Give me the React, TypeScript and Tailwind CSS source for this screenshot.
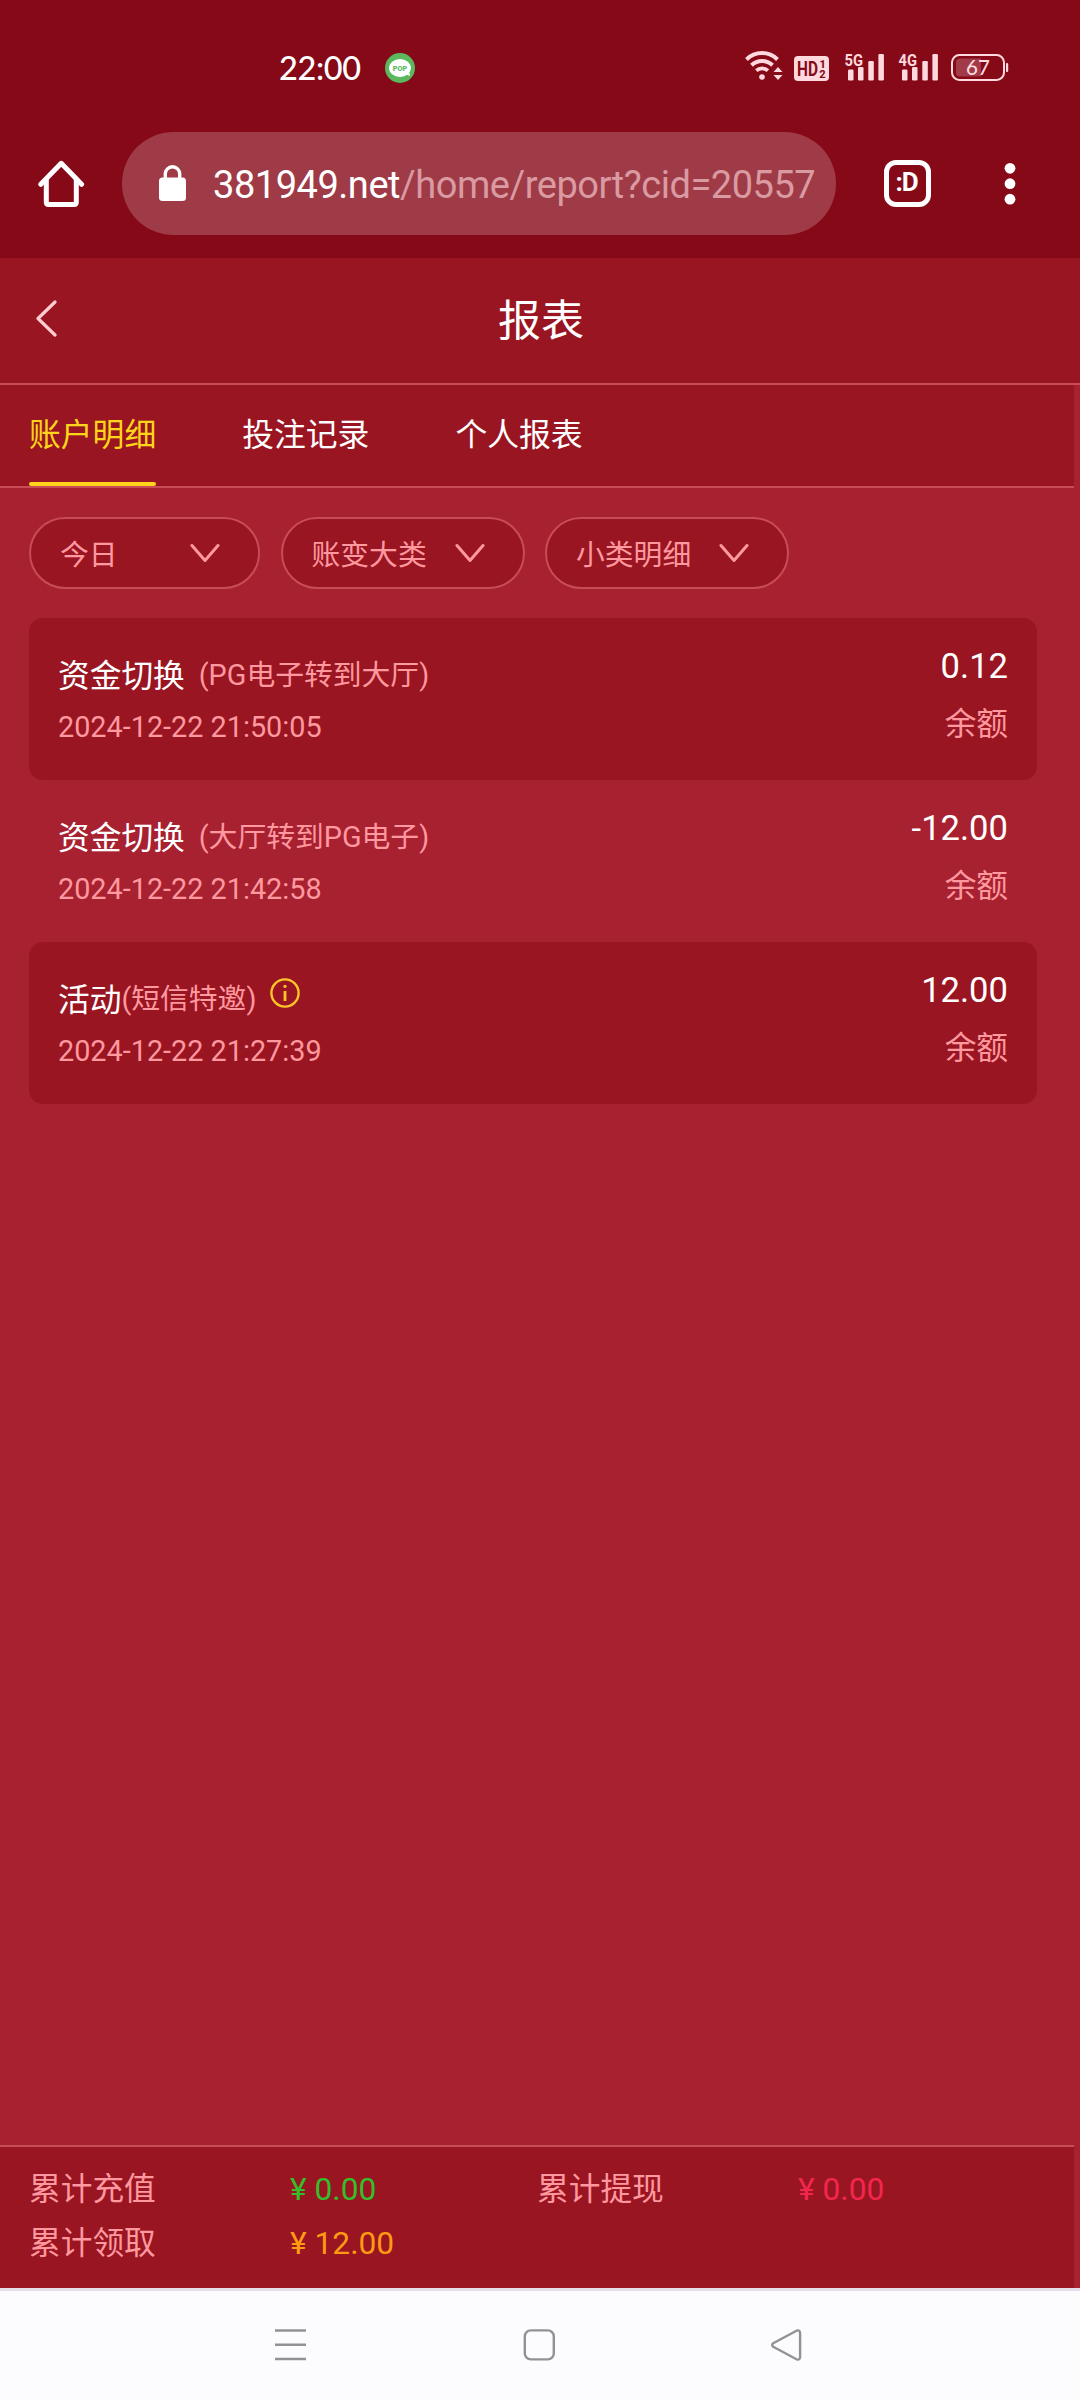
import type { ReactNode } from "react";

type Entry = {
  title: string;
  note: string;
  spaced?: boolean;
  info?: boolean;
  time: string;
  amount: string;
};

const entries: Entry[] = [
  { title: "资金切换", note: "(PG电子转到大厅)", spaced: true, time: "2024-12-22 21:50:05", amount: "0.12" },
  { title: "资金切换", note: "(大厅转到PG电子)", spaced: true, time: "2024-12-22 21:42:58", amount: "-12.00" },
  { title: "活动", note: "(短信特邀)", info: true, time: "2024-12-22 21:27:39", amount: "12.00" },
];

const tabs = ["账户明细", "投注记录", "个人报表"];

const filters = [
  { label: "今日", width: "w-[231px]" },
  { label: "账变大类", width: "w-[244px]" },
  { label: "小类明细", width: "w-[244px]" },
];

const totals = [
  { label: "累计充值", value: "¥ 0.00", color: "text-[#35be2b]" },
  { label: "累计提现", value: "¥ 0.00", color: "text-[#f3264e]" },
  { label: "累计领取", value: "¥ 12.00", color: "text-[#ff9a12]" },
];

function Signal({ label }: { label: string }) {
  return (
    <svg width="40" height="40" viewBox="0 -10 40 40" fill="#ffd9dd">
      <text x="0.5" y="13.5" fontSize="16.5" fontWeight="700" textLength="18.5" lengthAdjust="spacingAndGlyphs" className="font-['Roboto',sans-serif]">
        {label}
      </text>
      <rect x="4" y="17.5" width="5.5" height="11" rx="1.2" />
      <rect x="14" y="15" width="5.5" height="13.5" rx="1.2" />
      <rect x="24.3" y="9" width="5.5" height="19.5" rx="1.2" />
      <rect x="34.4" y="2" width="5.5" height="26.5" rx="1.2" />
    </svg>
  );
}

function StatusBar() {
  return (
    <div className="flex h-[132px] items-start pt-[50px]">
      <span className="ml-[279px] w-[106px] font-['Lato',sans-serif] text-[32.5px] leading-[36px] font-medium tracking-[-0.4px] text-white">
        22:00
      </span>
      <svg width="30" height="30" viewBox="0 0 30 30" className="mt-[3px]">
        <circle cx="15" cy="15" r="15" fill="#5bb85d" />
        <ellipse cx="15" cy="15" rx="11" ry="9" fill="#fff" />
        <path d="M20 21l5 2-1-5z" fill="#fff" />
        <text x="7.8" y="18" fontSize="8" fontWeight="900" textLength="14.4" lengthAdjust="spacingAndGlyphs" fill="#5bb85d" className="font-['Roboto',sans-serif]">
          POP
        </text>
      </svg>
      <svg width="38" height="30" viewBox="0 0 38 30" fill="none" stroke="#ffd9dd" className="ml-[330px]">
        <path d="M1.5 9.5a22 22 0 0 1 31 0" strokeWidth="4" />
        <path d="M6.5 15.2a15 15 0 0 1 21 0" strokeWidth="4" />
        <path d="M11.3 20.7a8.5 8.5 0 0 1 11.6 0" strokeWidth="3.8" />
        <circle cx="17" cy="27" r="2.8" fill="#ffd9dd" stroke="none" />
        <path d="M28.5 22h9L33 17zM28.5 25h9L33 30z" fill="#ffd9dd" stroke="none" />
      </svg>
      <svg width="35" height="25" viewBox="0 0 35 25" className="mt-[6px] ml-[11px]">
        <rect width="35" height="25" rx="4" fill="#ffd9dd" />
        <text x="3" y="19.5" fontSize="19.5" fontWeight="700" textLength="21" lengthAdjust="spacingAndGlyphs" fill="#860918" className="font-['Roboto',sans-serif]">
          HD
        </text>
        <text x="25.5" y="11.5" fontSize="11" fontWeight="800" fill="#860918" className="font-['Roboto',sans-serif]">
          1
        </text>
        <text x="25.2" y="21.5" fontSize="11" fontWeight="800" fill="#860918" className="font-['Roboto',sans-serif]">
          2
        </text>
      </svg>
      <div className="-mt-[8px] ml-[15px] flex gap-[14px]">
        <Signal label="5G" />
        <Signal label="4G" />
      </div>
      <svg width="58" height="28" viewBox="0 0 58 28" className="mt-[4px] ml-[13px]">
        <rect x="1" y="1" width="52" height="25" rx="7.5" fill="none" stroke="#ffd9dd" strokeWidth="2" />
        <path d="M9 4.5h21v18H9a4 4 0 0 1-4-4v-10a4 4 0 0 1 4-4z" fill="#a23a48" />
        <rect x="55" y="9" width="2.2" height="9" rx="1" fill="#ffd9dd" />
        <text x="15" y="21" fontSize="20.5" fontWeight="500" fill="#ffd9dd" className="font-['Lato',sans-serif]">
          67
        </text>
      </svg>
    </div>
  );
}

function AddressBar() {
  return (
    <div className="flex h-[126px] items-start">
      <svg width="48" height="48" viewBox="0 0 48 48" fill="none" stroke="#fff" strokeWidth="5" strokeLinecap="round" strokeLinejoin="round" className="mt-[28px] ml-[37px]">
        <path d="M3.8 24.3L24.2 3.3l20.4 21" />
        <path d="M9.3 20v22.2q0 2.2 2.2 2.2h25.6q2.2 0 2.2-2.2V20" />
      </svg>
      <div className="ml-[37px] flex h-[103px] w-[714px] items-center rounded-full bg-[#9f3b47] pl-[37px]">
        <svg width="27" height="36" viewBox="0 0 27 36" fill="none" className="mb-[1px]">
          <rect y="12.5" width="27" height="23.5" rx="3.5" fill="#fff" />
          <path d="M6.3 14V9a7.2 7.2 0 0 1 14.4 0v5" stroke="#fff" strokeWidth="3.4" />
        </svg>
        <span className="mt-[3px] ml-[27px] text-[38px] leading-[44px] tracking-[-0.47px] whitespace-nowrap text-[#da9aa2]">
          <span className="text-white">381949.net</span>/home/report?cid=20557
        </span>
      </div>
      <div className="mt-[28px] ml-[48px] flex h-[47px] w-[47px] justify-center rounded-[12px] border-[5px] border-white pr-[2px] text-[26px] leading-[35px] font-bold tracking-[-1px] text-white">
        :D
      </div>
      <svg width="12" height="44" viewBox="0 0 12 44" fill="#fff" className="mt-[30px] ml-[72.5px]">
        <circle cx="6" cy="6.3" r="5.4" />
        <circle cx="6" cy="21.7" r="5.4" />
        <circle cx="6" cy="37.2" r="5.4" />
      </svg>
    </div>
  );
}

function FilterPill({ label, width }: { label: string; width: string }) {
  return (
    <div className={`flex h-[72px] items-center justify-between rounded-full border-2 border-[#c84c57] bg-[#991522] pr-[38px] pl-[29px] ${width}`}>
      <span className="mt-[3px] text-[28.8px] leading-[40px] text-[#ff989f]">{label}</span>
      <svg width="30" height="20" viewBox="0 0 30 20" fill="none" stroke="#ff989f" strokeWidth="3" strokeLinecap="round" strokeLinejoin="round">
        <path d="M2 2.5l13 15 13-15" />
      </svg>
    </div>
  );
}

function EntryRow({ entry, shaded }: { entry: Entry; shaded: boolean }) {
  return (
    <div className={`flex h-[162px] justify-between rounded-[14px] px-[29px] ${shaded ? "bg-[#991522]" : ""}`}>
      <div className="flex flex-col pt-[36px]">
        <div className="flex h-[46px] items-center">
          <span className="text-[31.7px] leading-[44px] text-white">{entry.title}</span>
          <span className={`mb-[4px] text-[28.8px] leading-[40px] text-[#ff989f] ${entry.spaced ? "ml-[14px]" : ""}`}>{entry.note}</span>
          {entry.info && (
            <svg width="30" height="30" viewBox="0 0 30 30" fill="none" stroke="#fec52a" strokeWidth="2.4" className="mb-[16px] ml-[14px]">
              <circle cx="15" cy="15" r="13.6" />
              <path d="M15 13v10" strokeWidth="2.8" />
              <circle cx="15" cy="8.3" r="1.6" fill="#fec52a" stroke="none" />
            </svg>
          )}
        </div>
        <span className="mt-[7px] text-[28.8px] leading-[40px] text-[#ff989f]">{entry.time}</span>
      </div>
      <div className="flex flex-col items-end pt-[24px]">
        <span className="text-[34.6px] leading-[48px] text-white">{entry.amount}</span>
        <span className="mt-[13px] text-[31.7px] leading-[44px] text-[#ff989f]">余额</span>
      </div>
    </div>
  );
}

function NavIcon({ children }: { children: ReactNode }) {
  return (
    <svg width="32" height="32" viewBox="0 0 32 32" fill="none" stroke="#929294" strokeWidth="2.4" strokeLinejoin="round">
      {children}
    </svg>
  );
}

export default function App() {
  return (
    <div className="flex h-[2400px] w-[1080px] flex-col overflow-hidden bg-[#a72130] font-['Roboto','Noto_Sans_CJK_SC',sans-serif]">
      <div className="bg-[#860918]">
        <StatusBar />
        <AddressBar />
      </div>

      <header className="grid h-[127px] grid-cols-3 items-center border-b-2 border-[#c84c57] bg-[#991522]">
        <svg width="23" height="37" viewBox="0 0 23 37" fill="none" stroke="#ffcdd1" strokeWidth="3.2" strokeLinecap="round" strokeLinejoin="round" className="mb-[4px] ml-[35px]">
          <path d="M20 2L3 18.5 20 35" />
        </svg>
        <h1 className="ml-[2px] text-center text-[43px] leading-[60px] text-white">报表</h1>
      </header>

      <nav className="flex h-[103px] w-[1074px] gap-[86px] border-b-2 border-[#c84c57] bg-[#991522] pl-[29px]">
        {tabs.map((tab, i) => (
          <div
            key={tab}
            className={`flex flex-col justify-between pt-[28px] text-[31.8px] leading-[44px] ${i === 0 ? "text-[#fed51b]" : "text-white"}`}
          >
            {tab}
            {i === 0 && <div className="h-[4px] rounded-full bg-[#fed51b]" />}
          </div>
        ))}
      </nav>

      <main className="flex-1 px-[29px]">
        <div className="flex gap-[20.5px] pt-[29px]">
          {filters.map((f) => (
            <FilterPill key={f.label} label={f.label} width={f.width} />
          ))}
        </div>
        <div className="mt-[29px] w-[1008px]">
          {entries.map((entry, i) => (
            <EntryRow key={entry.time} entry={entry} shaded={i % 2 === 0} />
          ))}
        </div>
      </main>

      <footer className="h-[143px] w-[1074px] border-t-2 border-[#c84c57] bg-[#991522] px-[29px] pt-[16px]">
        <div className="grid grid-cols-2 text-[31.7px] leading-[54px]">
          {totals.map((t) => (
            <div key={t.label} className="grid grid-cols-2">
              <span className="text-[#ff989f]">{t.label}</span>
              <span className={`pl-[7px] ${t.color}`}>{t.value}</span>
            </div>
          ))}
        </div>
      </footer>

      <div className="flex h-[112px] gap-[216px] border-t-3 border-[#e6deea] bg-[#fcfcfe] pt-[38px] pl-[275px]">
        <NavIcon>
          <path d="M0 1.5h31M0 15.8h31M0 30h31" strokeWidth="2.6" />
        </NavIcon>
        <NavIcon>
          <rect x="1.8" y="1.4" width="29" height="29" rx="6" />
        </NavIcon>
        <NavIcon>
          <path d="M2.2 14.2L25.5 1.7q3.4-1.2 3.6 2.3v24q-.2 3.5-3.6 2.3L2.2 17.8q-2-1.8 0-3.6z" />
        </NavIcon>
      </div>
    </div>
  );
}
